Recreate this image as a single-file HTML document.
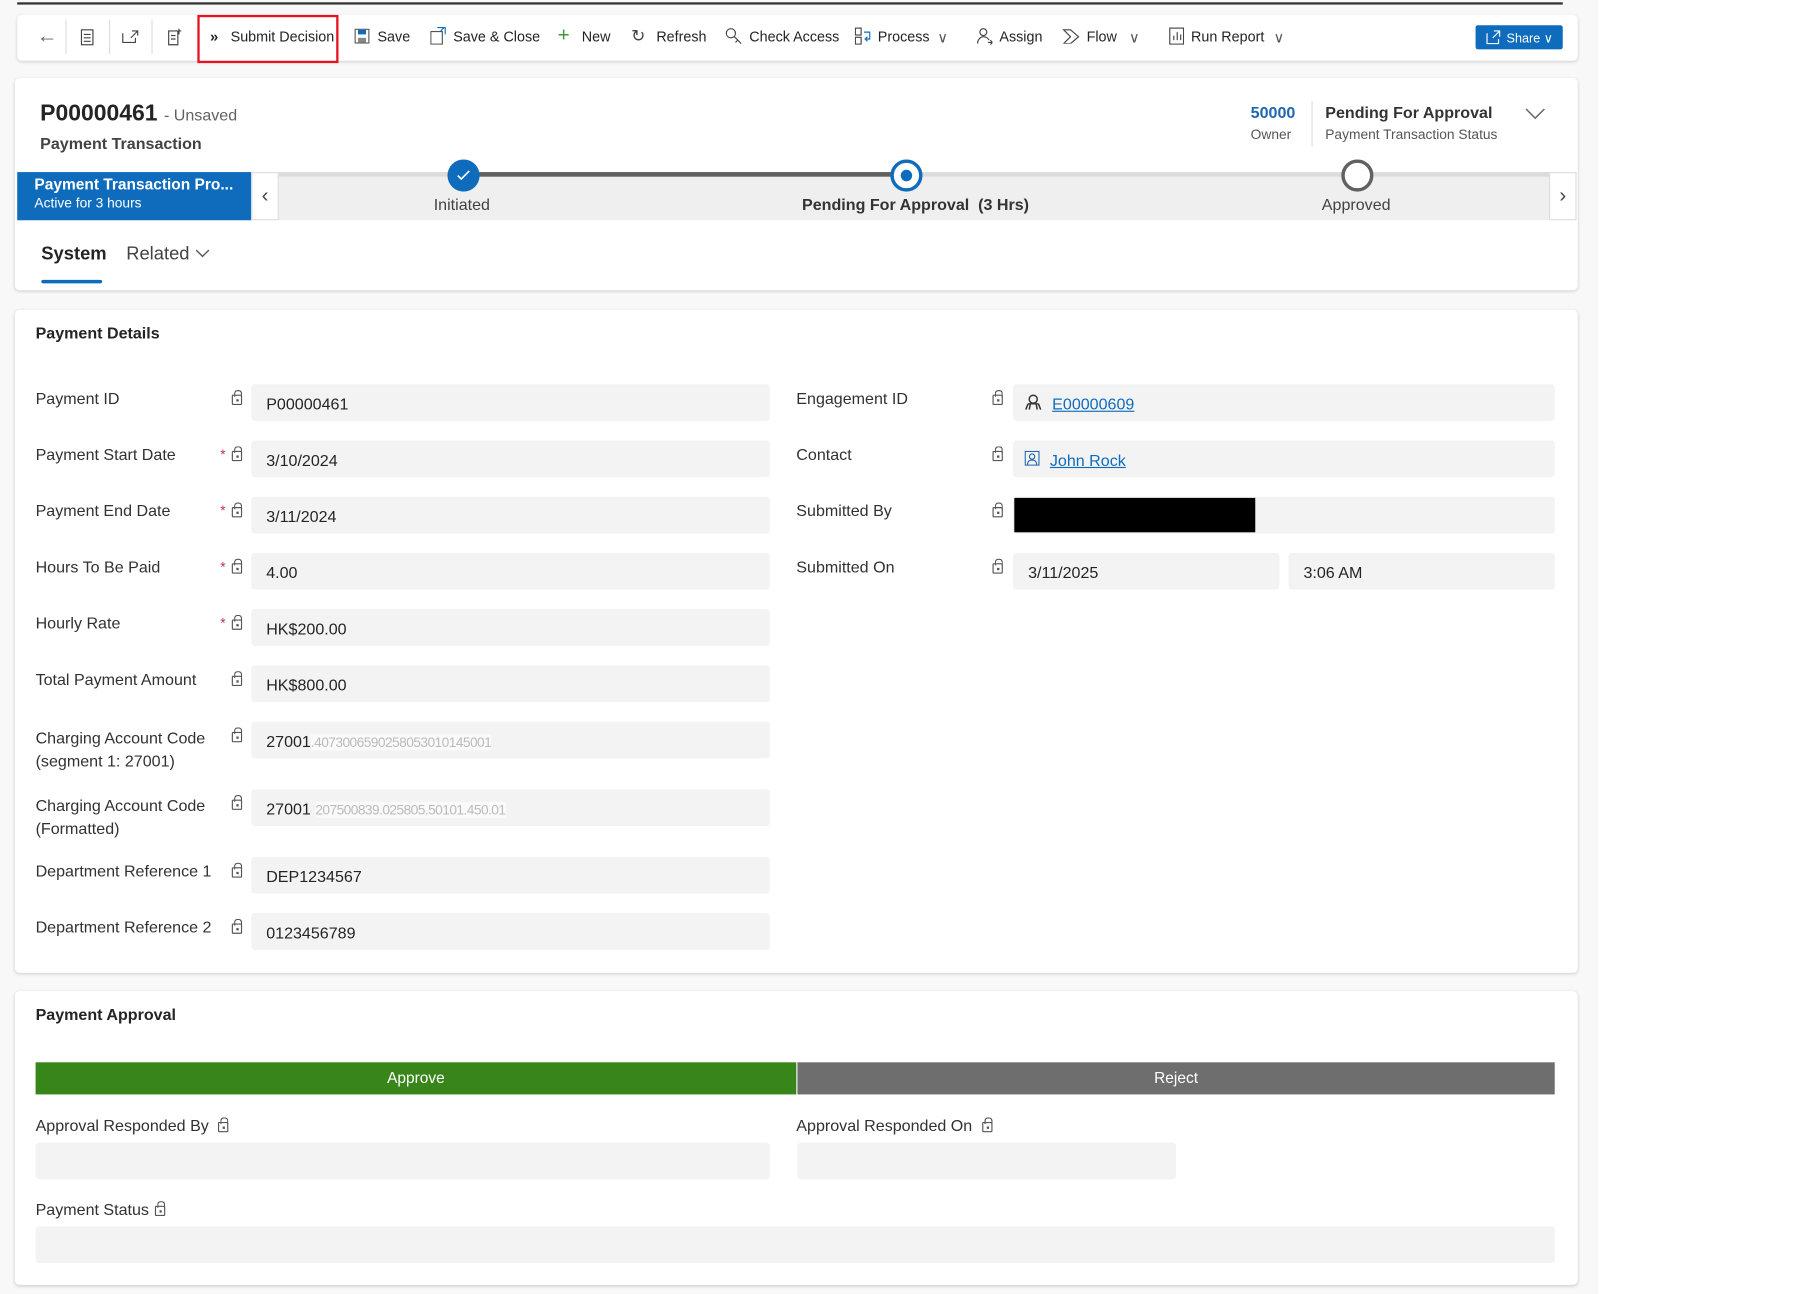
<!DOCTYPE html>
<html><head><meta charset="utf-8">
<style>
*{box-sizing:border-box;margin:0;padding:0}
html,body{width:1799px;height:1294px;overflow:hidden;background:#fff}
body{font-family:"Liberation Sans",Arial,sans-serif;color:#242424}
#s{position:absolute;left:0;top:0;width:1568px;height:1128px;transform:scale(1.1474,1.1472);transform-origin:0 0}
.a{position:absolute}
.bg{left:0;top:0;width:1393px;height:1128px;background:#f8f8f8}
.card{background:#fff;border-radius:4px;box-shadow:0 1px 3px rgba(0,0,0,.16)}
.cmd{font-size:12.5px;color:#242424;top:25px;white-space:nowrap}
.lbl{font-size:14px;color:#323130}
.box{background:#f3f3f3;border-radius:3px;height:32px;font-size:14px;padding:9px 13px;color:#242424;white-space:nowrap}
.lock{width:9px;height:9px;border:1.3px solid #555;border-radius:1px}
.lock:before{content:"";position:absolute;left:1px;top:-5px;width:5px;height:5px;border:1.3px solid #555;border-bottom:none;border-radius:3px 3px 0 0}
.lock:after{content:"";position:absolute;left:2.5px;top:2.5px;width:2px;height:2px;background:#555}
.req{color:#c4314b;font-size:12px}
.sep{width:1px;height:30px;background:#ddd;top:17px}
.blur{color:#bbb;background:#fafafa;font-size:12px;letter-spacing:-.5px}
</style></head><body><div id="s">
<div class="a bg"></div>
<div class="a" style="left:15px;top:2px;width:1347px;height:2px;background:#333"></div>
<div class="a card" style="left:15px;top:13px;width:1360px;height:40px"></div>
<div class="a" style="left:32px;top:22px;font-size:18px;color:#666;line-height:18px">&#8592;</div>
<div class="a sep" style="left:57px"></div>
<svg class="a" style="left:70px;top:25px" width="12" height="15"><rect x="1" y="1" width="10" height="13" fill="none" stroke="#444"/><path d="M3 5h6M3 8h6M3 11h6" stroke="#444"/></svg>
<div class="a sep" style="left:95px"></div>
<svg class="a" style="left:106px;top:26px" width="15" height="12"><path d="M1 3v8h11V7M9 1h5v4M14 1l-6 6" fill="none" stroke="#444"/></svg>
<div class="a sep" style="left:132px"></div>
<svg class="a" style="left:145px;top:24px" width="14" height="16"><path d="M2 3h8v12H2zM4 7h4M4 10h4M11 1v5M9 3h4" fill="none" stroke="#444"/></svg>
<div class="a" style="left:172px;top:13px;width:123px;height:42px;border:2.5px solid #e81123"></div>
<div class="a cmd" style="left:183px;font-weight:bold;font-size:13px;top:24px">&#187;</div>
<div class="a cmd" style="left:201px">Submit Decision</div>
<svg class="a" style="left:309px;top:25px" width="13" height="13"><rect x=".5" y=".5" width="12" height="12" fill="#fff" stroke="#555"/><rect x="3" y="1" width="7" height="4" fill="#0f6cbd"/><rect x="3" y="8" width="7" height="4" fill="#888"/></svg>
<div class="a cmd" style="left:329px">Save</div>
<svg class="a" style="left:375px;top:23px" width="14" height="16"><rect x=".5" y="4.5" width="10" height="11" fill="#fff" stroke="#555"/><path d="M6 1h7v6M9 4l3-3" fill="none" stroke="#0f6cbd"/></svg>
<div class="a cmd" style="left:395px">Save &amp; Close</div>
<div class="a cmd" style="left:486px;color:#3a9a3a;font-size:18px;top:20px">+</div>
<div class="a cmd" style="left:507px">New</div>
<div class="a cmd" style="left:550px;font-size:15px;top:22px;color:#444">&#8635;</div>
<div class="a cmd" style="left:572px">Refresh</div>
<svg class="a" style="left:632px;top:24px" width="15" height="15"><circle cx="5" cy="5" r="4" fill="none" stroke="#444"/><path d="M8 8l6 6M11 11l-2 2" stroke="#444"/></svg>
<div class="a cmd" style="left:653px">Check Access</div>
<svg class="a" style="left:745px;top:24px" width="14" height="15"><rect x=".5" y=".5" width="5" height="6" fill="none" stroke="#444"/><rect x=".5" y="8.5" width="5" height="6" fill="none" stroke="#444"/><path d="M8 4h5v6H9M11 8l-2 2 2 2" fill="none" stroke="#0f6cbd"/></svg>
<div class="a cmd" style="left:765px">Process</div>
<div class="a cmd" style="left:817px;color:#555">&#8744;</div>
<svg class="a" style="left:851px;top:24px" width="14" height="15"><circle cx="6" cy="4" r="3" fill="none" stroke="#444"/><path d="M1 14c0-4 3-6 5-6s4 1 5 3M10 13h4M12 11l2 2-2 2" fill="none" stroke="#444"/></svg>
<div class="a cmd" style="left:871px">Assign</div>
<svg class="a" style="left:926px;top:25px" width="15" height="13"><path d="M1 1h6l7 6-7 6H1l6-6z" fill="none" stroke="#444"/></svg>
<div class="a cmd" style="left:947px">Flow</div>
<div class="a cmd" style="left:984px;color:#555">&#8744;</div>
<svg class="a" style="left:1018px;top:24px" width="14" height="15"><rect x="1.5" y=".5" width="12" height="14" fill="none" stroke="#444"/><path d="M5 11V7M8 11V4M11 11V6" stroke="#444"/></svg>
<div class="a cmd" style="left:1038px">Run Report</div>
<div class="a cmd" style="left:1110px;color:#555">&#8744;</div>
<div class="a" style="left:1286px;top:22px;width:76px;height:21px;background:#0f6cbd;border-radius:2px;color:#fff;font-size:11px;padding:5px 0 0 27px">Share &#8744;</div>
<svg class="a" style="left:1295px;top:26px" width="13" height="13"><path d="M1 3v9h10V8M7 1h5v5M12 1L6 7" fill="none" stroke="#fff"/></svg>
<div class="a card" style="left:13px;top:68px;width:1362px;height:185px"></div>
<div class="a" style="left:35px;top:88px;font-size:20px;font-weight:bold;color:#242424">P00000461 <span style="font-size:14px;font-weight:normal;color:#616161">- Unsaved</span></div>
<div class="a" style="left:35px;top:117px;font-size:14px;font-weight:bold;color:#424242">Payment Transaction</div>
<div class="a" style="left:1090px;top:90px;font-size:14px;font-weight:bold;color:#2266b0">50000</div>
<div class="a" style="left:1090px;top:110px;font-size:12px;color:#555">Owner</div>
<div class="a" style="left:1143px;top:88px;width:1px;height:40px;background:#ddd"></div>
<div class="a" style="left:1155px;top:90px;font-size:14px;font-weight:bold;color:#333">Pending For Approval</div>
<div class="a" style="left:1155px;top:110px;font-size:12px;color:#555">Payment Transaction Status</div>
<svg class="a" style="left:1329px;top:94px" width="18" height="10"><path d="M1 1l8 8 8-8" fill="none" stroke="#666" stroke-width="1.3"/></svg>
<div class="a" style="left:243px;top:150px;width:1107px;height:42px;background:#efefef"></div>
<div class="a" style="left:243px;top:150px;width:1107px;height:4px;background:#dcdcdc"></div>
<div class="a" style="left:404px;top:150px;width:386px;height:4px;background:#616161"></div>
<div class="a" style="left:15px;top:150px;width:204px;height:42px;background:#0f6cbd;color:#fff;padding:3px 0 0 15px"><div style="font-size:13.5px;font-weight:bold">Payment Transaction Pro...</div><div style="font-size:12px;margin-top:2px">Active for 3 hours</div></div>
<div class="a" style="left:219px;top:150px;width:24px;height:42px;background:#fff;border:1px solid #ddd;font-size:18px;color:#444;text-align:center;padding-top:9px">&#8249;</div>
<div class="a" style="left:1350px;top:150px;width:24px;height:42px;background:#fff;border:1px solid #ddd;font-size:18px;color:#444;text-align:center;padding-top:9px">&#8250;</div>
<div class="a" style="left:390px;top:139px;width:28px;height:28px;border-radius:50%;background:#0f6cbd"></div>
<svg class="a" style="left:397px;top:146px" width="14" height="14"><path d="M2 7l3 3 7-7" fill="none" stroke="#fff" stroke-width="1.4"/></svg>
<div class="a" style="left:776px;top:139px;width:28px;height:28px;border-radius:50%;background:#fff;border:3.5px solid #0f6cbd"></div>
<div class="a" style="left:785px;top:148px;width:10px;height:10px;border-radius:50%;background:#0f6cbd"></div>
<div class="a" style="left:1169px;top:139px;width:28px;height:28px;border-radius:50%;background:#fff;border:3.5px solid #616161"></div>
<div class="a" style="left:378px;top:170px;font-size:14px;color:#424242">Initiated</div>
<div class="a" style="left:699px;top:170px;font-size:14px;font-weight:bold;color:#333">Pending For Approval&nbsp; (3 Hrs)</div>
<div class="a" style="left:1152px;top:170px;font-size:14px;color:#424242">Approved</div>
<div class="a" style="left:36px;top:213px;font-size:16px;font-weight:bold;color:#242424">System</div>
<div class="a" style="left:36px;top:244px;width:53px;height:3px;background:#0f6cbd;border-radius:2px"></div>
<div class="a" style="left:110px;top:213px;font-size:16px;color:#424242">Related</div>
<svg class="a" style="left:170px;top:217px" width="13" height="8"><path d="M1 1l5.5 5.5L12 1" fill="none" stroke="#555" stroke-width="1.2"/></svg>
<div class="a card" style="left:13px;top:270px;width:1362px;height:578px"></div>
<div class="a" style="left:31px;top:282px;font-size:14px;font-weight:bold">Payment Details</div>

<div class="a lbl" style="left:31px;top:339px">Payment ID</div><div class="a lock" style="left:202px;top:344px"></div><div class="a box" style="left:219px;top:335px;width:452px">P00000461</div>
<div class="a lbl" style="left:31px;top:388px">Payment Start Date</div><div class="a req" style="left:192px;top:389px">*</div><div class="a lock" style="left:202px;top:393px"></div><div class="a box" style="left:219px;top:384px;width:452px">3/10/2024</div>
<div class="a lbl" style="left:31px;top:437px">Payment End Date</div><div class="a req" style="left:192px;top:438px">*</div><div class="a lock" style="left:202px;top:442px"></div><div class="a box" style="left:219px;top:433px;width:452px">3/11/2024</div>
<div class="a lbl" style="left:31px;top:486px">Hours To Be Paid</div><div class="a req" style="left:192px;top:487px">*</div><div class="a lock" style="left:202px;top:491px"></div><div class="a box" style="left:219px;top:482px;width:452px">4.00</div>
<div class="a lbl" style="left:31px;top:535px">Hourly Rate</div><div class="a req" style="left:192px;top:536px">*</div><div class="a lock" style="left:202px;top:540px"></div><div class="a box" style="left:219px;top:531px;width:452px">HK$200.00</div>
<div class="a lbl" style="left:31px;top:584px">Total Payment Amount</div><div class="a lock" style="left:202px;top:589px"></div><div class="a box" style="left:219px;top:580px;width:452px">HK$800.00</div>
<div class="a lbl" style="left:31px;top:633px;line-height:20px">Charging Account Code<br>(segment 1: 27001)</div><div class="a lock" style="left:202px;top:638px"></div><div class="a box" style="left:219px;top:629px;width:452px">27001<span class="blur">.4073006590258053010145001</span></div>
<div class="a lbl" style="left:31px;top:692px;line-height:20px">Charging Account Code<br>(Formatted)</div><div class="a lock" style="left:202px;top:697px"></div><div class="a box" style="left:219px;top:688px;width:452px">27001 <span class="blur">207500839.025805.50101.450.01</span></div>
<div class="a lbl" style="left:31px;top:751px">Department Reference 1</div><div class="a lock" style="left:202px;top:756px"></div><div class="a box" style="left:219px;top:747px;width:452px">DEP1234567</div>
<div class="a lbl" style="left:31px;top:800px">Department Reference 2</div><div class="a lock" style="left:202px;top:805px"></div><div class="a box" style="left:219px;top:796px;width:452px">0123456789</div>

<div class="a lbl" style="left:694px;top:339px">Engagement ID</div><div class="a lock" style="left:865px;top:344px"></div><div class="a box" style="left:883px;top:335px;width:472px;padding-left:34px"><span style="color:#0f6cbd;text-decoration:underline">E00000609</span></div>
<svg class="a" style="left:893px;top:343px" width="15" height="15"><circle cx="7.5" cy="5" r="3.5" fill="none" stroke="#333" stroke-width="1.3"/><path d="M3 9l-2 5M12 9l2 5M5 9l-1 5M10 9l1 5M3 9h9" fill="none" stroke="#333" stroke-width="1.3"/></svg>
<div class="a lbl" style="left:694px;top:388px">Contact</div><div class="a lock" style="left:865px;top:393px"></div><div class="a box" style="left:883px;top:384px;width:472px;padding-left:32px"><span style="color:#0f6cbd;text-decoration:underline">John Rock</span></div>
<svg class="a" style="left:893px;top:393px" width="13" height="13"><rect x=".5" y=".5" width="12" height="12" fill="none" stroke="#2266b0"/><circle cx="6.5" cy="5" r="2.3" fill="none" stroke="#2266b0"/><path d="M2.5 12c0-3 2-4 4-4s4 1 4 4" fill="none" stroke="#2266b0"/></svg>
<div class="a lbl" style="left:694px;top:437px">Submitted By</div><div class="a lock" style="left:865px;top:442px"></div><div class="a box" style="left:883px;top:433px;width:472px"></div>
<div class="a" style="left:884px;top:434px;width:210px;height:30px;background:#000"></div>
<div class="a lbl" style="left:694px;top:486px">Submitted On</div><div class="a lock" style="left:865px;top:491px"></div>
<div class="a box" style="left:883px;top:482px;width:232px">3/11/2025</div>
<div class="a box" style="left:1123px;top:482px;width:232px">3:06 AM</div>
<div class="a card" style="left:13px;top:864px;width:1362px;height:256px"></div>
<div class="a" style="left:31px;top:876px;font-size:14px;font-weight:bold">Payment Approval</div>
<div class="a" style="left:31px;top:926px;width:663px;height:28px;background:#38861a;color:#fff;font-size:13.5px;text-align:center;padding-top:6px">Approve</div>
<div class="a" style="left:695px;top:926px;width:660px;height:28px;background:#6e6e6e;color:#fff;font-size:13.5px;text-align:center;padding-top:6px">Reject</div>
<div class="a lbl" style="left:31px;top:973px">Approval Responded By</div><div class="a lock" style="left:190px;top:978px"></div>
<div class="a box" style="left:31px;top:996px;width:640px"></div>
<div class="a lbl" style="left:694px;top:973px">Approval Responded On</div><div class="a lock" style="left:856px;top:978px"></div>
<div class="a box" style="left:695px;top:996px;width:330px"></div>
<div class="a lbl" style="left:31px;top:1046px">Payment Status</div><div class="a lock" style="left:135px;top:1051px"></div>
<div class="a box" style="left:31px;top:1069px;width:1324px"></div>
</div></body></html>
